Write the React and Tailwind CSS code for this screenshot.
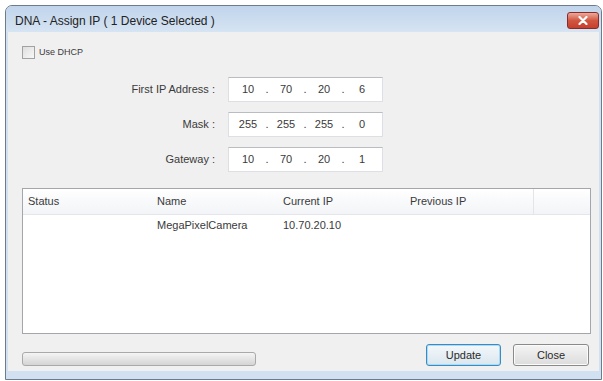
import React from "react";

const FIELDS = [
  { label: "First IP Address :", parts: ["10", "70", "20", "6"] },
  { label: "Mask :", parts: ["255", "255", "255", "0"] },
  { label: "Gateway :", parts: ["10", "70", "20", "1"] },
];

const COLUMNS = [
  { title: "Status", w: "w-[129px]" },
  { title: "Name", w: "w-[126px]" },
  { title: "Current IP", w: "w-[127px]" },
  { title: "Previous IP", w: "w-[128px]" },
];

const ROWS = [["", "MegaPixelCamera", "10.70.20.10", ""]];

function IpBox({ parts }) {
  return (
    <div className="w-[155px] h-[25px] bg-white border border-[#dcdfe3] border-t-[#b9bcc1] flex items-center pl-[4px] text-[11px] text-[#3a3a3a]">
      {parts.map((p, i) => (
        <React.Fragment key={i}>
          {i > 0 && <span className="w-[8px] text-center">.</span>}
          <span className="w-[30px] text-center">{p}</span>
        </React.Fragment>
      ))}
    </div>
  );
}

export default function App() {
  return (
    <div
      className="w-[603px] h-[381px] bg-white pt-[5px] pl-[5px] overflow-hidden"
      style={{ fontFamily: '"Liberation Sans", Arial, sans-serif' }}
    >
      {/* window frame */}
      <div className="w-[597px] h-[375px] flex flex-col rounded-t-[7px] border border-[#6d7b8d] bg-[#d2e1f1] overflow-hidden">
        {/* title bar */}
        <div className="h-[26px] flex items-start bg-gradient-to-b from-[#c0d4eb] to-[#d6e4f3]">
          <span className="pl-[9px] pt-[8px] text-[12px] leading-[14px] text-[#222]">
            DNA - Assign IP ( 1 Device Selected )
          </span>
          <button className="ml-auto mr-[2px] mt-[6px] w-[32px] h-[17px] rounded-[3px] border border-[#8a2b2b] bg-gradient-to-b from-[#e9a99c] via-[#d2553f] to-[#c4402e] flex items-center justify-center">
            <svg width="10" height="9" viewBox="0 0 10 9">
              <path d="M1.5 1 L8.5 8 M8.5 1 L1.5 8" stroke="#ffffff" strokeWidth="2.2" strokeLinecap="round" />
            </svg>
          </button>
        </div>

        {/* client area */}
        <div className="flex-1 px-[2px] pb-[8px] flex flex-col">
          <div className="flex-1 bg-[#f0f0f0] flex flex-col">
            {/* DHCP checkbox */}
            <div className="mt-[14px] ml-[14px] h-[13px] flex items-center gap-[4px]">
              <div className="w-[13px] h-[13px] border border-[#a2a2a2] bg-gradient-to-br from-[#dedede] to-[#f8f8f8]" />
              <span className="text-[9px] text-[#3a3a3a]">Use DHCP</span>
            </div>

            {/* IP fields */}
            <div className="mt-[18px] flex flex-col gap-[10px]">
              {FIELDS.map((f) => (
                <div key={f.label} className="h-[25px] flex items-center gap-[13px]">
                  <span className="w-[207px] text-right text-[11px] text-[#3a3a3a]">{f.label}</span>
                  <IpBox parts={f.parts} />
                </div>
              ))}
            </div>

            {/* device list */}
            <div className="mt-[16px] ml-[14px] w-[569px] h-[146px] border border-[#a3a6ab] bg-white flex flex-col">
              <div className="h-[26px] flex items-center bg-gradient-to-b from-white to-[#f2f4f7] border-b border-[#e4e6ea] text-[11px] text-[#3a3a3a]">
                {COLUMNS.map((c) => (
                  <div key={c.title} className={`${c.w} pl-[5px]`}>{c.title}</div>
                ))}
                <div className="w-px h-full bg-[#e3e5e8]" />
              </div>
              {ROWS.map((r, i) => (
                <div key={i} className="h-[20px] flex items-center text-[11px] text-[#3a3a3a]">
                  {r.map((cell, j) => (
                    <div key={j} className={`${COLUMNS[j].w} pl-[5px]`}>{cell}</div>
                  ))}
                </div>
              ))}
            </div>

            {/* progress + buttons */}
            <div className="mt-[10px] ml-[14px] mr-[10px] flex items-start">
              <div className="mt-[8px] w-[234px] h-[14px] rounded-[3px] border border-[#a9a9a9] bg-gradient-to-b from-[#f5f5f5] via-[#e4e4e4] to-[#d4d4d4]" />
              <button className="ml-auto w-[75px] h-[22px] rounded-[3px] border border-[#3d8ac2] bg-gradient-to-b from-[#f4f8fb] to-[#d9e6ee] text-[11px] text-[#2a2a2a] shadow-[inset_0_0_0_1px_#a6dcf5]">
                Update
              </button>
              <button className="ml-[12px] w-[76px] h-[22px] rounded-[3px] border border-[#8a8a8a] bg-gradient-to-b from-[#f4f4f4] to-[#dcdcdc] text-[11px] text-[#2a2a2a] shadow-[inset_0_0_0_1px_#fbfbfb]">
                Close
              </button>
            </div>
          </div>
        </div>
      </div>
    </div>
  );
}
